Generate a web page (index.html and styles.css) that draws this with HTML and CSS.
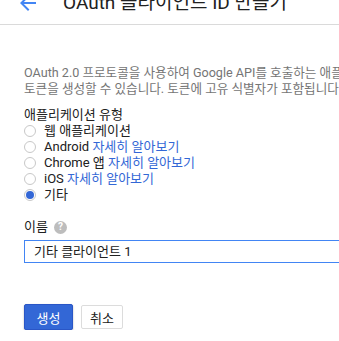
FILE: index.html
```html
<!DOCTYPE html>
<html>
<head>
	<meta charset="utf-8">
	<title>OAuth 클라이언트 ID 만들기</title>
	<link rel="stylesheet" href="styles.css">
</head>
<body>
<div class="header">
	<div class="header-inner">
		<svg class="back" width="24" height="24" viewBox="0 0 24 24"><path d="M20 11H7.83l5.59-5.59L12 4l-8 8 8 8 1.41-1.41L7.83 13H20v-2z" fill="#4285f4"/></svg>
		<h1 class="title">OAuth 클라이언트 ID 만들기</h1>
	</div>
</div>

<div class="content">
	<p class="desc">OAuth 2.0 프로토콜을 사용하여 Google API를 호출하는 애플리케이션의 경우 클라이언트 ID를 사용하여 액세스<br>토큰을 생성할 수 있습니다. 토큰에 고유 식별자가 포함됩니다. <a href="#">자세히 알아보기</a></p>

	<div class="label">애플리케이션 유형</div>
	<ul class="radios">
		<li><span class="radio"></span>웹 애플리케이션</li>
		<li><span class="radio"></span>Android <a href="#">자세히 알아보기</a></li>
		<li><span class="radio"></span>Chrome 앱 <a href="#">자세히 알아보기</a></li>
		<li><span class="radio"></span>iOS <a href="#">자세히 알아보기</a></li>
		<li><span class="radio checked"></span>기타</li>
	</ul>

	<div class="label name-label">이름 <span class="help">?</span></div>
	<div class="input">기타 클라이언트 1</div>

	<div class="actions">
		<button class="btn btn-primary">생성</button>
		<button class="btn">취소</button>
	</div>
</div>
</body>
</html>
```

FILE: styles.css
```css
html, body {
	margin: 0;
	padding: 0;
	background: #fff;
	overflow: hidden;
}
body {
	font-family: Roboto, "Noto Sans CJK KR", sans-serif;
	font-size: 13px;
	color: #212121;
}
a {
	color: #3367d6;
	text-decoration: none;
}

.header {
	height: 24px;
	border-bottom: 1px solid #dadada;
	overflow: hidden;
}
.header-inner {
	display: flex;
	align-items: center;
	margin-top: -9px;
	padding-left: 16px;
	height: 24px;
}
.back {
	flex: none;
}
.title {
	margin: 0 0 0 23px;
	font-size: 19px;
	font-weight: normal;
	line-height: 24px;
	color: #212121;
	white-space: nowrap;
}

.content {
	padding: 40px 0 0 24px;
	width: 800px;
}
.desc {
	margin: 0 0 10px;
	line-height: 16px;
	font-size: 12.6px;
	color: #757575;
	white-space: nowrap;
}
.label {
	line-height: 16px;
}
.radios {
	list-style: none;
	margin: 0;
	padding: 0;
}
.radios li {
	height: 16px;
	line-height: 16px;
	white-space: nowrap;
}
.radio {
	display: inline-block;
	box-sizing: border-box;
	width: 12px;
	height: 12px;
	margin-right: 8px;
	vertical-align: -2px;
	border: 1px solid #c8c8c8;
	border-radius: 50%;
	position: relative;
}
.radio.checked:after {
	content: '';
	position: absolute;
	left: 1px;
	top: 1px;
	width: 8px;
	height: 8px;
	border-radius: 50%;
	background: #3367d6;
}

.name-label {
	margin-top: 16px;
	display: flex;
	align-items: center;
}
.help {
	display: inline-flex;
	align-items: center;
	justify-content: center;
	width: 13px;
	height: 13px;
	margin-left: 6px;
	border-radius: 50%;
	background: #bdbdbd;
	color: #fff;
	font-size: 10px;
	font-weight: bold;
}
.input {
	margin-top: 5px;
	box-sizing: border-box;
	height: 23px;
	line-height: 21px;
	padding: 0 9px;
	border: 1px solid #4285f4;
	width: 400px;
	white-space: nowrap;
}

.actions {
	margin-top: 41px;
	display: flex;
	align-items: center;
	gap: 8px;
}
.btn {
	font-family: Roboto, "Noto Sans CJK KR", sans-serif;
	font-size: 13px;
	height: 24px;
	padding: 0 8px;
	border: 1px solid #dcdcdc;
	border-radius: 2px;
	background: #fff;
	color: #212121;
}
.btn-primary {
	height: 26px;
	width: 49px;
	background: #3367d6;
	border-color: #2a56c6;
	color: #fff;
	box-shadow: 0 1px 2px rgba(0, 0, 0, 0.3);
}
```
